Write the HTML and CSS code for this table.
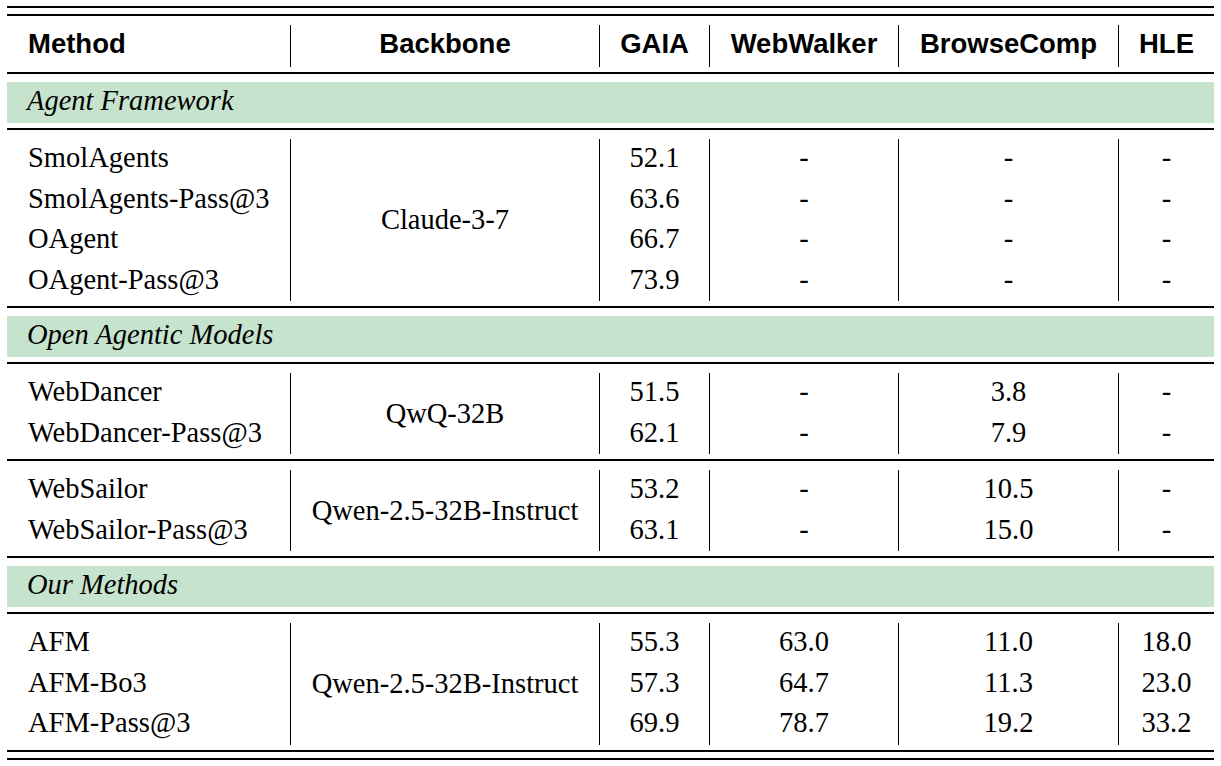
FILE: index.html
```html
<!DOCTYPE html>
<html>
<head>
<meta charset="utf-8">
<link rel="stylesheet" href="styles.css">
</head>
<body>
<div class="tbl">
  <div class="rule rule-top"></div>
  <div class="rule rule-second"></div>
  <div class="head">
    <div class="col c1"><div class="hcell left">Method</div></div>
    <div class="col c2 vl"><div class="hcell">Backbone</div></div>
    <div class="col c3 vl"><div class="hcell">GAIA</div></div>
    <div class="col c4 vl"><div class="hcell">WebWalker</div></div>
    <div class="col c5 vl"><div class="hcell">BrowseComp</div></div>
    <div class="col c6 vl"><div class="hcell">HLE</div></div>
  </div>
  <div class="rule"></div>

  <div class="band">Agent Framework</div>
  <div class="rule"></div>
  <div class="group">
    <div class="col c1">
      <div class="row left">SmolAgents</div>
      <div class="row left">SmolAgents-Pass@3</div>
      <div class="row left">OAgent</div>
      <div class="row left">OAgent-Pass@3</div>
    </div>
    <div class="col c2 vl span">Claude-3-7</div>
    <div class="col c3 vl">
      <div class="row">52.1</div><div class="row">63.6</div><div class="row">66.7</div><div class="row">73.9</div>
    </div>
    <div class="col c4 vl">
      <div class="row">-</div><div class="row">-</div><div class="row">-</div><div class="row">-</div>
    </div>
    <div class="col c5 vl">
      <div class="row">-</div><div class="row">-</div><div class="row">-</div><div class="row">-</div>
    </div>
    <div class="col c6 vl">
      <div class="row">-</div><div class="row">-</div><div class="row">-</div><div class="row">-</div>
    </div>
  </div>
  <div class="rule"></div>

  <div class="band">Open Agentic Models</div>
  <div class="rule"></div>
  <div class="group">
    <div class="col c1">
      <div class="row left">WebDancer</div>
      <div class="row left">WebDancer-Pass@3</div>
    </div>
    <div class="col c2 vl span">QwQ-32B</div>
    <div class="col c3 vl"><div class="row">51.5</div><div class="row">62.1</div></div>
    <div class="col c4 vl"><div class="row">-</div><div class="row">-</div></div>
    <div class="col c5 vl"><div class="row">3.8</div><div class="row">7.9</div></div>
    <div class="col c6 vl"><div class="row">-</div><div class="row">-</div></div>
  </div>
  <div class="rule"></div>
  <div class="group">
    <div class="col c1">
      <div class="row left">WebSailor</div>
      <div class="row left">WebSailor-Pass@3</div>
    </div>
    <div class="col c2 vl span">Qwen-2.5-32B-Instruct</div>
    <div class="col c3 vl"><div class="row">53.2</div><div class="row">63.1</div></div>
    <div class="col c4 vl"><div class="row">-</div><div class="row">-</div></div>
    <div class="col c5 vl"><div class="row">10.5</div><div class="row">15.0</div></div>
    <div class="col c6 vl"><div class="row">-</div><div class="row">-</div></div>
  </div>
  <div class="rule"></div>

  <div class="band">Our Methods</div>
  <div class="rule"></div>
  <div class="group">
    <div class="col c1">
      <div class="row left">AFM</div>
      <div class="row left">AFM-Bo3</div>
      <div class="row left">AFM-Pass@3</div>
    </div>
    <div class="col c2 vl span">Qwen-2.5-32B-Instruct</div>
    <div class="col c3 vl"><div class="row">55.3</div><div class="row">57.3</div><div class="row">69.9</div></div>
    <div class="col c4 vl"><div class="row">63.0</div><div class="row">64.7</div><div class="row">78.7</div></div>
    <div class="col c5 vl"><div class="row">11.0</div><div class="row">11.3</div><div class="row">19.2</div></div>
    <div class="col c6 vl"><div class="row">18.0</div><div class="row">23.0</div><div class="row">33.2</div></div>
  </div>
  <div class="rule"></div>
  <div class="rule rule-last"></div>
</div>
</body>
</html>
```
FILE: styles.css
```css
html, body {
  margin: 0;
  padding: 0;
  background: #ffffff;
}

body {
  font-family: "Liberation Serif", "Times New Roman", serif;
  font-size: 28.5px;
  color: #000000;
}

.tbl {
  width: 1207px;
  margin-left: 7px;
  padding-top: 6px;
}

.rule {
  height: 2px;
  background: #000000;
}

.rule-second {
  margin-top: 6px;
}

.rule-last {
  margin-top: 6px;
}

.head,
.group {
  display: flex;
}

.head {
  padding: 9px 0 5px;
}

.group {
  padding: 9px 0 5px;
}

.col {
  display: flex;
  flex-direction: column;
}

.c1 { width: 283px; }
.c2 { width: 309px; }
.c3 { width: 110px; }
.c4 { width: 189px; }
.c5 { width: 220px; }
.c6 { width: 96px; }

.vl {
  border-left: 1px solid #000000;
  box-sizing: border-box;
}

.hcell {
  height: 42px;
  line-height: 37px;
  padding-bottom: 5px;
  box-sizing: border-box;
  font-family: "Liberation Sans", Arial, sans-serif;
  font-weight: bold;
  font-size: 27.5px;
  text-align: center;
}

.left {
  text-align: left;
  padding-left: 21px;
}

.row {
  height: 40.5px;
  line-height: 38.5px;
  padding-bottom: 2px;
  box-sizing: border-box;
  text-align: center;
  white-space: nowrap;
}

.row.left {
  text-align: left;
}

.span {
  justify-content: center;
  align-items: center;
  line-height: 40px;
  white-space: nowrap;
}

.band {
  margin: 8px 0 5px;
  height: 41px;
  line-height: 37px;
  padding: 0 0 4px 20px;
  box-sizing: border-box;
  background: rgb(198, 228, 205);
  font-style: italic;
}
```
